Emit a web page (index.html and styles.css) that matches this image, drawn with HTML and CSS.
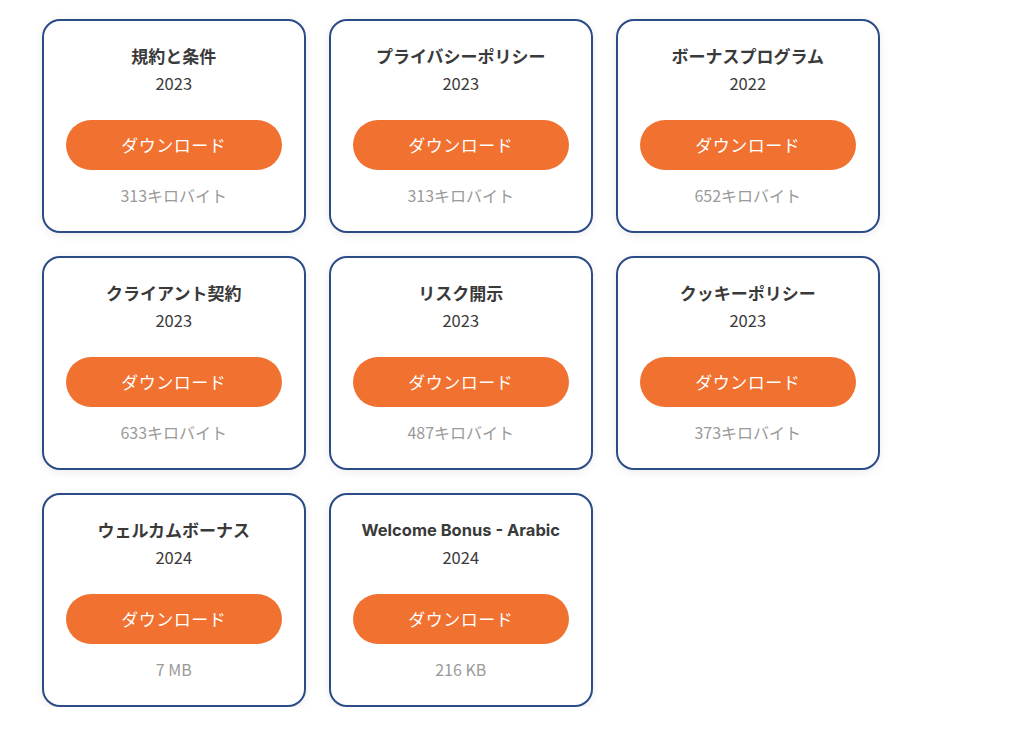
FILE: index.html
```html
<!DOCTYPE html>
<html lang="ja">
<head>
<meta charset="utf-8">
<link rel="stylesheet" href="styles.css">
</head>
<body>
<div class="grid">
  <div class="card"><div class="title">規約と条件</div><div class="year">2023</div><a class="btn">ダウンロード</a><div class="size">313キロバイト</div></div>
  <div class="card"><div class="title">プライバシーポリシー</div><div class="year">2023</div><a class="btn">ダウンロード</a><div class="size">313キロバイト</div></div>
  <div class="card"><div class="title">ボーナスプログラム</div><div class="year">2022</div><a class="btn">ダウンロード</a><div class="size">652キロバイト</div></div>
  <div class="card"><div class="title">クライアント契約</div><div class="year">2023</div><a class="btn">ダウンロード</a><div class="size">633キロバイト</div></div>
  <div class="card"><div class="title">リスク開示</div><div class="year">2023</div><a class="btn">ダウンロード</a><div class="size">487キロバイト</div></div>
  <div class="card"><div class="title">クッキーポリシー</div><div class="year">2023</div><a class="btn">ダウンロード</a><div class="size">373キロバイト</div></div>
  <div class="card"><div class="title">ウェルカムボーナス</div><div class="year">2024</div><a class="btn">ダウンロード</a><div class="size">7 MB</div></div>
  <div class="card"><div class="title latin">Welcome Bonus - Arabic</div><div class="year">2024</div><a class="btn">ダウンロード</a><div class="size">216 KB</div></div>
</div>
</body>
</html>
```
FILE: styles.css
```css
html, body { margin: 0; padding: 0; background: #fff; }
body { font-family: "Noto Sans CJK JP", "Noto Sans", sans-serif; }
.grid {
  display: grid;
  grid-template-columns: repeat(3, 263.5px);
  column-gap: 23.5px;
  row-gap: 23px;
  padding: 19px 0 0 42px;
}
.card {
  box-sizing: border-box;
  height: 214px;
  border: 2px solid #2b4c87;
  border-radius: 18px;
  background: #fff;
  box-shadow: 0 2px 10px rgba(0,0,0,0.08);
  padding: 23px 22px 0;
  display: flex;
  flex-direction: column;
  align-items: center;
  text-align: center;
}
.title {
  font-size: 17px;
  font-weight: 700;
  color: #3a3a3a;
  line-height: 24px;
}
.title.latin { font-family: Inter, "Noto Sans", sans-serif; font-size: 16.5px; }
.year {
  margin-top: 3px;
  font-size: 16.5px;
  color: #3a3a3a;
  line-height: 24px;
}
.btn {
  margin-top: 25px;
  width: 216px;
  height: 50px;
  border-radius: 25px;
  background: #f07130;
  color: #fff;
  font-size: 17px;
  line-height: 50px;
  letter-spacing: 0.5px;
}
.size {
  margin-top: 13px;
  font-size: 16px;
  line-height: 24px;
  color: #9a9a9a;
}
```
